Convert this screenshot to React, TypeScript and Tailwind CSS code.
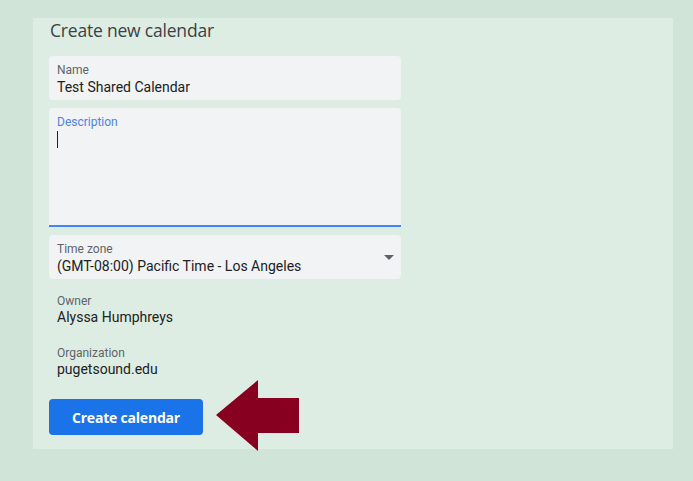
interface FieldProps {
  label: string
  value: string
}

function FilledField({ label, value }: FieldProps) {
  return (
    <div className="h-[44px] w-[352px] rounded-[4px] bg-[#f1f3f4] px-2 pt-[6px]">
      <p className="text-[12px] leading-[16px] text-[#5f6368]">{label}</p>
      <p className="text-[14px] leading-[18px] text-[#202124]">{value}</p>
    </div>
  )
}

function ReadOnlyField({ label, value }: FieldProps) {
  return (
    <div className="px-2">
      <p className="text-[12px] leading-[16px] text-[#5f6368]">{label}</p>
      <p className="text-[14px] leading-[16px] text-[#202124]">{value}</p>
    </div>
  )
}

function PointerArrow() {
  return (
    <svg width="84" height="72" viewBox="0 0 84 72" className="absolute left-[167px] top-[-19px]">
      <polygon points="0,35 42,0 42,18 83,18 83,53 42,53 42,71" fill="#880020" />
    </svg>
  )
}

export default function App() {
  return (
    <div
      className="h-[481px] w-[693px] bg-[#d0e5d8] pl-[33px] pt-[18px]"
      style={{ fontFamily: 'Roboto, "Liberation Sans", sans-serif' }}
    >
      <div className="h-[431px] w-[640px] bg-[#ddede3] pl-4">
        <h1
          className="pl-[1px] pt-[1px] text-[17.5px] leading-[22px] tracking-[-0.2px] text-[#3c4043]"
          style={{ fontFamily: '"Open Sans", Roboto, sans-serif' }}
        >
          Create new calendar
        </h1>

        <div className="mt-[15px] flex flex-col gap-2">
          <FilledField label="Name" value="Test Shared Calendar" />

          <div className="h-[119px] w-[352px] rounded-t-[4px] border-b-2 border-[#4285f4] bg-[#f1f3f4] px-2 pt-[6px]">
            <p className="text-[12px] leading-[16px] text-[#4e82ee]">Description</p>
            <div className="mt-[1px] h-[17px] w-px bg-[#202124]" />
          </div>

          <div className="relative">
            <FilledField label="Time zone" value="(GMT-08:00) Pacific Time - Los Angeles" />
            <svg width="10" height="5" viewBox="0 0 10 5" className="absolute left-[335px] top-[20px]">
              <polygon points="0,0 10,0 5,5" fill="#5f6368" />
            </svg>
          </div>
        </div>

        <div className="mt-[14px] flex flex-col gap-[20px]">
          <ReadOnlyField label="Owner" value="Alyssa Humphreys" />
          <ReadOnlyField label="Organization" value="pugetsound.edu" />
        </div>

        <div className="relative mt-[22px] h-[36px]">
          <button
            className="h-[36px] w-[154px] rounded-[4px] bg-[#1a73e8] text-[14px] font-bold tracking-[-0.2px] text-white"
            style={{ fontFamily: '"Open Sans", Roboto, sans-serif' }}
          >
            Create calendar
          </button>
          <PointerArrow />
        </div>
      </div>
    </div>
  )
}
